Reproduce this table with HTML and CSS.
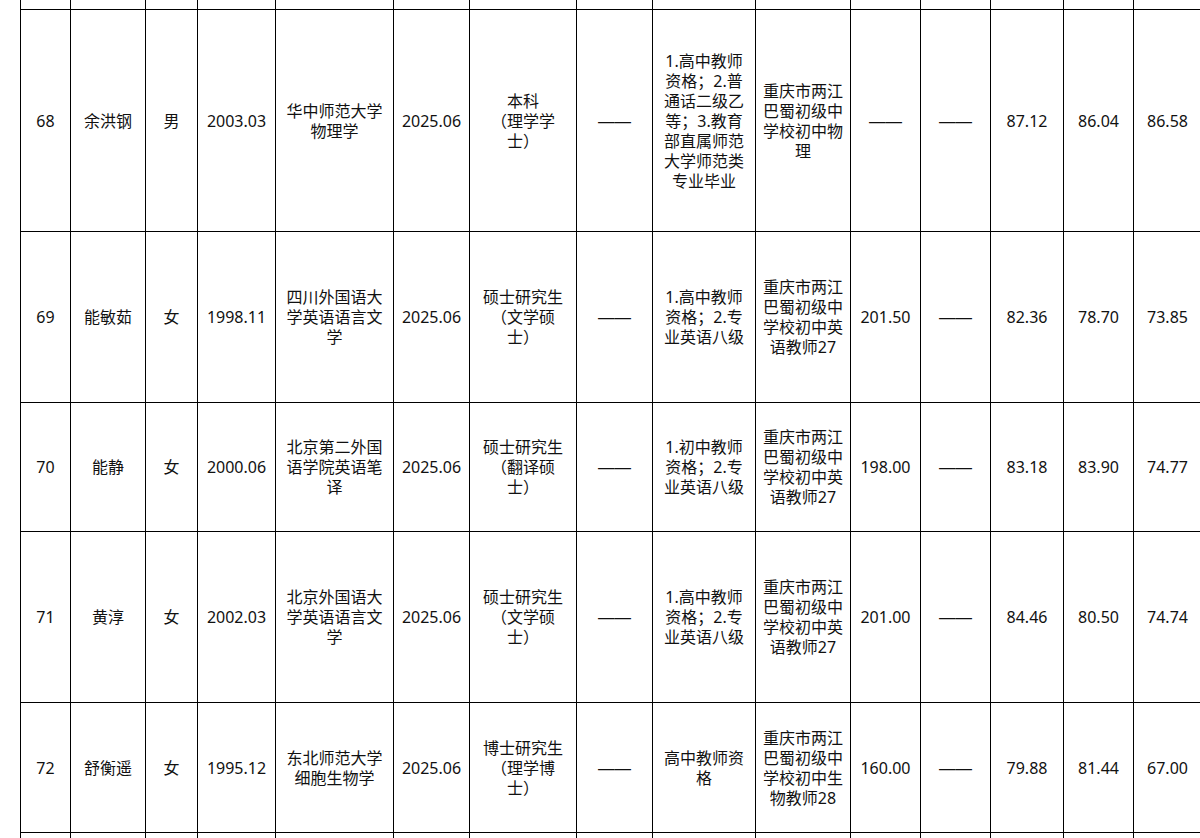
FILE: index.html
```html
<!DOCTYPE html>
<html lang="zh-CN">
<head>
<meta charset="utf-8">
<title>成绩表</title>
<link rel="stylesheet" href="styles.css">
</head>
<body>
<div class="sheet">
  <div class="row row-cut-top">
    <div class="c"></div><div class="c"></div><div class="c"></div><div class="c"></div><div class="c"></div><div class="c"></div><div class="c"></div><div class="c"></div><div class="c"></div><div class="c"></div><div class="c"></div><div class="c"></div><div class="c"></div><div class="c"></div><div class="c"></div>
  </div>
  <div class="row h222">
    <div class="c">68</div><div class="c">余洪钢</div><div class="c">男</div><div class="c">2003.03</div><div class="c">华中师范大学物理学</div><div class="c">2025.06</div><div class="c">本科<br>（理学学士）</div><div class="c dash">——</div><div class="c">1.高中教师资格；2.普通话二级乙等；3.教育部直属师范大学师范类专业毕业</div><div class="c">重庆市两江巴蜀初级中学校初中物理</div><div class="c dash">——</div><div class="c dash">——</div><div class="c">87.12</div><div class="c">86.04</div><div class="c">86.58</div>
  </div>
  <div class="row h171">
    <div class="c">69</div><div class="c">能敏茹</div><div class="c">女</div><div class="c">1998.11</div><div class="c">四川外国语大学英语语言文学</div><div class="c">2025.06</div><div class="c">硕士研究生<br>（文学硕士）</div><div class="c dash">——</div><div class="c">1.高中教师资格；2.专业英语八级</div><div class="c">重庆市两江巴蜀初级中学校初中英语教师27</div><div class="c">201.50</div><div class="c dash">——</div><div class="c">82.36</div><div class="c">78.70</div><div class="c">73.85</div>
  </div>
  <div class="row h129">
    <div class="c">70</div><div class="c">能静</div><div class="c">女</div><div class="c">2000.06</div><div class="c">北京第二外国语学院英语笔译</div><div class="c">2025.06</div><div class="c">硕士研究生<br>（翻译硕士）</div><div class="c dash">——</div><div class="c">1.初中教师资格；2.专业英语八级</div><div class="c">重庆市两江巴蜀初级中学校初中英语教师27</div><div class="c">198.00</div><div class="c dash">——</div><div class="c">83.18</div><div class="c">83.90</div><div class="c">74.77</div>
  </div>
  <div class="row h171">
    <div class="c">71</div><div class="c">黄淳</div><div class="c">女</div><div class="c">2002.03</div><div class="c">北京外国语大学英语语言文学</div><div class="c">2025.06</div><div class="c">硕士研究生<br>（文学硕士）</div><div class="c dash">——</div><div class="c">1.高中教师资格；2.专业英语八级</div><div class="c">重庆市两江巴蜀初级中学校初中英语教师27</div><div class="c">201.00</div><div class="c dash">——</div><div class="c">84.46</div><div class="c">80.50</div><div class="c">74.74</div>
  </div>
  <div class="row h130">
    <div class="c">72</div><div class="c">舒衡遥</div><div class="c">女</div><div class="c">1995.12</div><div class="c">东北师范大学细胞生物学</div><div class="c">2025.06</div><div class="c">博士研究生<br>（理学博士）</div><div class="c dash">——</div><div class="c">高中教师资格</div><div class="c">重庆市两江巴蜀初级中学校初中生物教师28</div><div class="c">160.00</div><div class="c dash">——</div><div class="c">79.88</div><div class="c">81.44</div><div class="c">67.00</div>
  </div>
  <div class="row h40">
    <div class="c"></div><div class="c"></div><div class="c"></div><div class="c"></div><div class="c"></div><div class="c"></div><div class="c"></div><div class="c"></div><div class="c"></div><div class="c"></div><div class="c"></div><div class="c"></div><div class="c"></div><div class="c"></div><div class="c"></div>
  </div>
</div>
</body>
</html>
```

FILE: styles.css
```css
html, body {
  margin: 0;
  padding: 0;
  background: #ffffff;
  overflow: hidden;
  width: 1200px;
  height: 838px;
}

.sheet {
  margin-left: 20px;
  width: 1181px;
  border-left: 1px solid #000;
  font-family: "Noto Sans", "Noto Sans CJK SC", sans-serif;
  font-size: 16px;
  line-height: 20px;
  color: #111;
  text-spacing-trim: space-all;
}

.row {
  display: grid;
  grid-template-columns: 50px 75px 52px 78px 118px 76px 107px 76px 103px 95px 70px 70px 73px 70px 68px;
}

.row-cut-top { height: 10px; }
.h222 { height: 222px; }
.h171 { height: 171px; }
.h129 { height: 129px; }
.h130 { height: 130px; }
.h40 { height: 40px; }

.c {
  box-sizing: border-box;
  border-right: 1px solid #000;
  border-bottom: 1px solid #000;
  padding: 0 6px;
  display: flex;
  align-items: center;
  justify-content: center;
  text-align: center;
  min-width: 0;
  overflow-wrap: anywhere;
}

.dash {
  font-family: "Liberation Sans", sans-serif;
  font-size: 16.5px;
}
```
